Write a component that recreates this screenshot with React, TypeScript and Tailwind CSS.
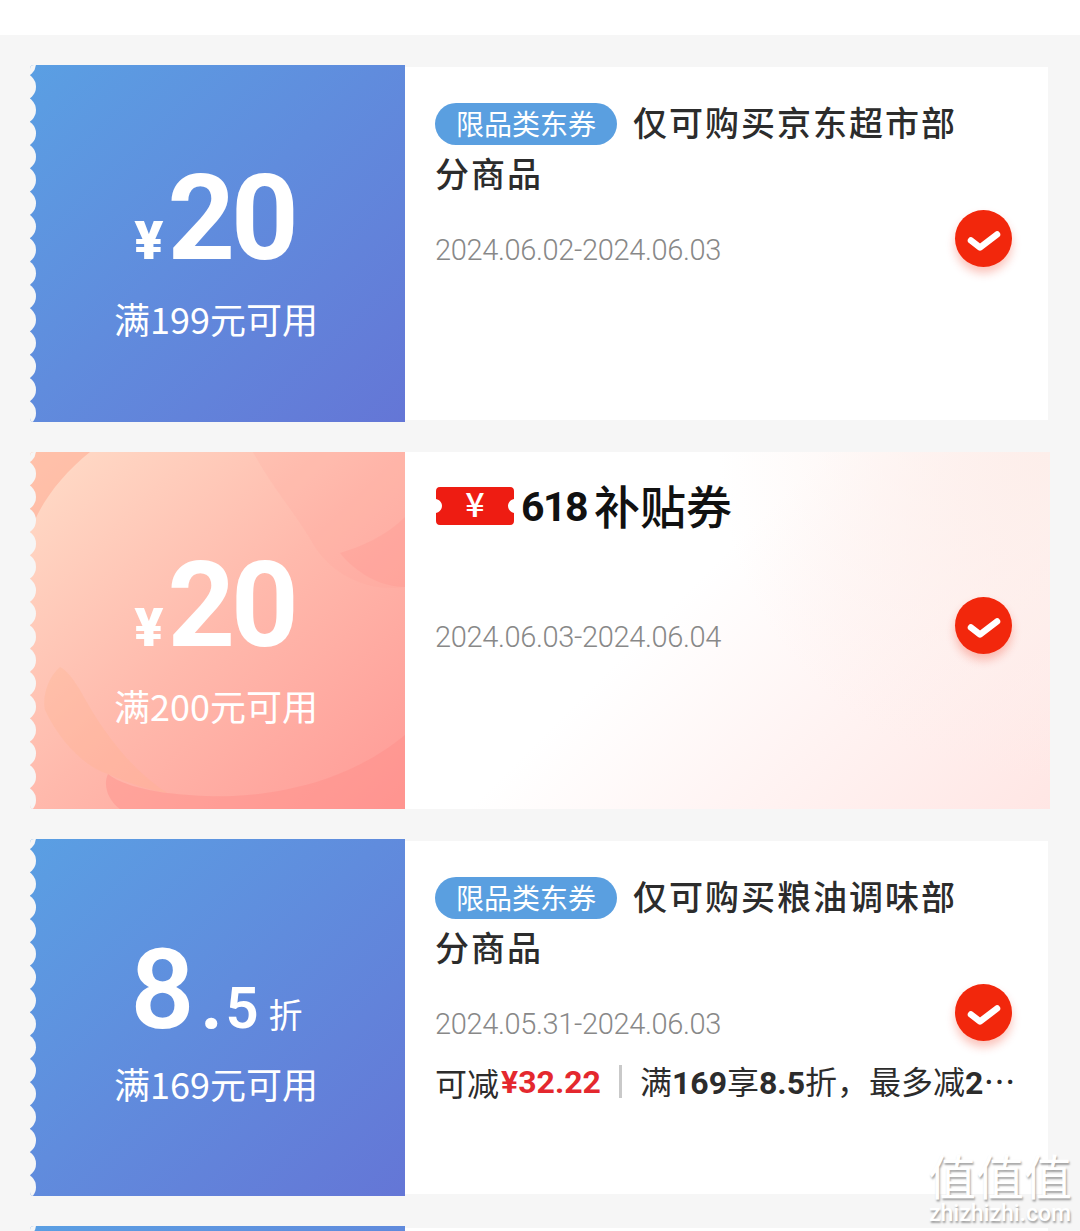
import React from 'react';

type Coupon = {
    id: number;
    peach?: boolean;
    discount?: boolean;
    amount?: string;
    minSpend?: string;
    title?: string;
    dates?: string;
    extra?: boolean;
};

const coupons: Coupon[] = [
    { id: 1, amount: '20', minSpend: '满199元可用', title: '仅可购买京东超市部分商品', dates: '2024.06.02-2024.06.03' },
    { id: 2, peach: true, amount: '20', minSpend: '满200元可用', dates: '2024.06.03-2024.06.04' },
    { id: 3, discount: true, minSpend: '满169元可用', title: '仅可购买粮油调味部分商品', dates: '2024.05.31-2024.06.03', extra: true },
    { id: 4 },
];

// bites taken out of the left edge of the stub
const ScallopEdge: React.FC = () => {
    const bites = Array.from({ length: 17 }, (_, i) => -1.5 + i * 23.3);
    return (
        <svg className="absolute left-0 top-0 h-[357px] w-[10px]" viewBox="0 0 10 357">
            {bites.map(y => (
                <circle key={y} cx={-8} cy={y} r={14} fill="#f6f6f6" />
            ))}
        </svg>
    );
};

const PeachArt: React.FC = () => (
    <svg className="absolute inset-0 h-full w-full" viewBox="0 0 375 357">
        <path d="M0 0H60C35 20 15 45 5 68L0 80Z" fill="#ffac92" fillOpacity="0.55" />
        <path d="M223 0C245 40 265 60 285 95C305 125 340 140 375 135V0Z" fill="#ff9c94" fillOpacity="0.14" />
        <path d="M375 65C355 85 330 95 310 101C325 120 350 135 375 135Z" fill="#ff8f88" fillOpacity="0.22" />
        <path d="M375 283C340 312 285 340 203 344C180 345 155 343 137 341C115 338 90 332 78 322C72 335 80 350 90 357H375Z" fill="#ff8d88" fillOpacity="0.42" />
        <path d="M30 215C18 225 12 245 15 258C30 290 55 315 78 322C100 332 120 338 137 341C105 320 75 285 50 238C42 225 36 218 30 215Z" fill="#ffb38f" fillOpacity="0.3" />
    </svg>
);

const CheckBadge: React.FC<{ peach?: boolean }> = ({ peach }) => (
    <div
        className={`absolute flex h-[57px] w-[57px] items-center justify-center rounded-full bg-[#f2270c] shadow-[0_6px_10px_rgba(242,39,12,0.28)] ${
            peach ? 'right-[38px] top-[145px]' : 'right-[36px] top-[143px]'
        }`}
    >
        <svg width="34" height="24" viewBox="0 0 34 24" fill="none">
            <path d="M4 13.5L13 20.5L30 7.5" stroke="white" strokeWidth="6.5" strokeLinecap="round" strokeLinejoin="round" />
        </svg>
    </div>
);

const SubsidyLogo: React.FC = () => (
    <div className="flex h-[42px] items-center">
        <svg width="80" height="40" viewBox="0 0 80 40">
            <path
                d="M5 1H75C78 1 79 3 79 5V13C75 14 73 17 73 20C73 23 75 26 79 27V35C79 37 78 39 75 39H5C2 39 1 37 1 35V27C5 26 7 23 7 20C7 17 5 14 1 13V5C1 3 2 1 5 1Z"
                fill="#ee1c12"
            />
            <text x="40" y="31" textAnchor="middle" fontSize="34" fontWeight="500" fill="white">¥</text>
        </svg>
        <span className="ml-[6px] mt-[2px] font-['Roboto',sans-serif] text-[41px] font-bold leading-[50px] tracking-[-1.5px] text-[#111]">618</span>
        <span className="mb-[4px] ml-[7px] text-[46px] font-medium leading-[50px] text-[#111]">补贴券</span>
    </div>
);

const CouponCard: React.FC<{ coupon: Coupon }> = ({ coupon }) => {
    const { peach, discount, amount, minSpend, title, dates, extra } = coupon;
    return (
        <div className="flex h-[357px] shrink-0">
            <div
                className={`relative flex w-[375px] shrink-0 flex-col items-center justify-center overflow-hidden rounded-l-[4px] pt-[14px] text-white ${
                    peach
                        ? 'bg-gradient-to-br from-[#ffdcc8] via-[#ffb9ac] to-[#ff9a96]'
                        : 'bg-gradient-to-br from-[#5a9fe3] to-[#6476d6]'
                }`}
            >
                {peach && <PeachArt />}
                <ScallopEdge />
                {amount && (
                    <div className="relative flex h-[118px] items-baseline pr-[6px] font-['Roboto','Noto_Sans_CJK_SC',sans-serif] font-black leading-none">
                        <span className="mr-[4px] text-[54px]">¥</span>
                        <span className="text-[118px] font-bold tracking-[-4px]">{amount}</span>
                    </div>
                )}
                {discount && (
                    <div className="relative flex h-[118px] items-baseline pr-[2px] font-['Roboto','Noto_Sans_CJK_SC',sans-serif] font-semibold leading-none">
                        <span className="text-[112px]">8</span>
                        <span className="ml-[6px] text-[76px] font-bold">.</span>
                        <span className="ml-[3px] text-[58px]">5</span>
                        <span className="ml-[10px] text-[34px] font-normal">折</span>
                    </div>
                )}
                {minSpend && (
                    <div className={`relative pr-[3px] text-[36px] leading-[44px] ${discount ? 'mb-[11px] mt-[9px]' : 'mb-[2px] mt-[18px]'}`}>
                        {minSpend}
                    </div>
                )}
            </div>
            <div
                className={`relative min-w-0 flex-1 pl-[30px] ${
                    peach
                        ? '-mr-[2px] bg-[radial-gradient(circle_at_100%_0%,#fdeeea_0%,#fdeeea00_45%),linear-gradient(135deg,#ffffff_0%,#ffffff_42%,#ffe6e4_100%)]'
                        : 'my-[2px] bg-white'
                }`}
            >
                {peach ? (
                    <div className="pt-[33px]"><SubsidyLogo /></div>
                ) : title ? (
                    <div className="w-[540px] pt-[29px] text-[34px] font-medium leading-[51px] tracking-[2px] text-[#2c2c2c]">
                        <span className="mr-[16px] inline-flex h-[42px] w-[182px] items-center justify-center rounded-full bg-[#5a9fe0] align-[1px] text-[28px] font-normal tracking-[0] text-white">
                            限品类东券
                        </span>
                        <span>{title}</span>
                    </div>
                ) : null}
                {dates && (
                    <div className={`font-['Roboto','Noto_Sans_CJK_SC',sans-serif] text-[29px] font-light leading-[40px] tracking-[-0.35px] text-[#888] ${peach ? 'pt-[90px]' : 'pt-[32px]'}`}>
                        {dates}
                    </div>
                )}
                {extra && (
                    <div className="mt-[16px] flex items-center text-[32px] leading-[40px] text-[#2c2c2c]">
                        <span>可减</span>
                        <span className="ml-[2px] font-['Roboto','Noto_Sans_CJK_SC',sans-serif] font-bold text-[#e4282e]">¥32.22</span>
                        <span className="mx-[18px] h-[33px] w-[3px] shrink-0 bg-[#c9c9c9]" />
                        <span className="w-[376px] truncate">
                            满<span className="font-['Roboto'] font-bold">169</span>享<span className="font-['Roboto'] font-bold">8.5</span>折，最多减<span className="font-['Roboto'] font-bold">20</span>元
                        </span>
                    </div>
                )}
                {dates && <CheckBadge peach={peach} />}
            </div>
        </div>
    );
};

const App: React.FC = () => {
    return (
        <div className="relative h-[1231px] w-[1080px] overflow-hidden bg-[#f6f6f6] font-['Noto_Sans_CJK_SC','Noto_Sans',sans-serif]">
            <div className="h-[35px] bg-white" />
            <div className="flex flex-col gap-[30px] pl-[30px] pr-[32px] pt-[30px]">
                {coupons.map(coupon => (
                    <CouponCard key={coupon.id} coupon={coupon} />
                ))}
            </div>
            <div className="absolute left-[923px] top-[1146px] w-[154px] text-center text-white [text-shadow:1px_2px_2px_rgba(0,0,0,0.35)]">
                <div className="text-[48px] font-normal leading-[56px]">值值值</div>
                <div className="mt-[1px] font-['Roboto',sans-serif] text-[23px] font-medium leading-[22px]">zhizhizhi.com</div>
            </div>
        </div>
    );
};

export default App;
